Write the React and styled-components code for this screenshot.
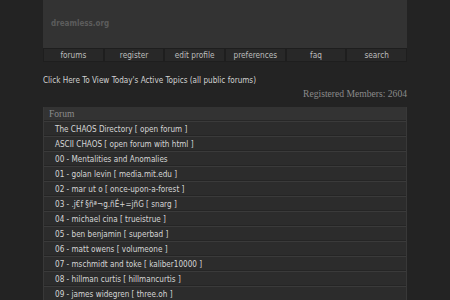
import React from "react";
import styled, { createGlobalStyle } from "styled-components";

const GlobalStyle = createGlobalStyle`
  html, body { margin: 0; padding: 0; background: #232323; }
  body { font-family: "DejaVu Sans Condensed", "Liberation Sans", Arial, sans-serif; }
`;

const Page = styled.div`
  width: 364px;
  margin: 0 auto;
`;

const Header = styled.div`
  height: 48px;
  background: #333333;
  display: flex;
  align-items: center;
  padding-left: 8px;
  box-sizing: border-box;
`;

const Logo = styled.div`
  font-size: 8px;
  font-weight: bold;
  color: #5c5c5c;
  margin-top: -1px;
`;

const Nav = styled.div`
  display: grid;
  grid-template-columns: repeat(6, 1fr);
  gap: 2px;
  padding: 1px;
  height: 14px;
  box-sizing: border-box;
  background: #1e1e1e;
`;

const NavItem = styled.a`
  display: flex;
  align-items: center;
  justify-content: center;
  background: #282828;
  color: #bdbdbd;
  font-size: 8.2px;
  text-decoration: none;
  line-height: 12px;
`;

const ActiveLink = styled.a`
  display: block;
  margin-top: 13px;
  line-height: 10px;
  font-size: 8.1px;
  color: #d2d2d2;
  text-decoration: none;
`;

const Members = styled.div`
  margin-top: 3px;
  line-height: 12px;
  text-align: right;
  font-family: "Liberation Serif", "Times New Roman", serif;
  font-size: 9.6px;
  color: #8a8a8a;
`;

const Table = styled.div`
  margin-top: 7px;
  border-left: 1px solid #383838;
  border-right: 1px solid #383838;
  box-sizing: border-box;
`;

const HeadRow = styled.div`
  height: 13px;
  background: #333333;
  border-bottom: 1px solid #272727;
  display: flex;
  align-items: center;
  padding-left: 5px;
  font-family: "Liberation Serif", "Times New Roman", serif;
  font-size: 9.5px;
  color: #8c8c8c;
`;

const Row = styled.div`
  height: 13px;
  background: #2c2c2c;
  border-top: 1px solid #3a3a3a;
  border-bottom: 1px solid #252525;
  display: flex;
  align-items: center;
  padding-left: 11px;
`;

const RowLink = styled.a`
  color: #d6d6d6;
  font-size: 8.1px;
  text-decoration: none;
  white-space: nowrap;
`;

const navItems = ["forums", "register", "edit profile", "preferences", "faq", "search"];

const forums = [
  "The CHAOS Directory [ open forum ]",
  "ASCII CHAOS [ open forum with html ]",
  "00 - Mentalities and Anomalies",
  "01 - golan levin [ media.mit.edu ]",
  "02 - mar ut o [ once-upon-a-forest ]",
  "03 - .j€f §ñª¬g.ñÉ+=jñG [ snarg ]",
  "04 - michael cina [ trueistrue ]",
  "05 - ben benjamin [ superbad ]",
  "06 - matt owens [ volumeone ]",
  "07 - mschmidt and toke [ kaliber10000 ]",
  "08 - hillman curtis [ hillmancurtis ]",
  "09 - james widegren [ three.oh ]",
];

export default function App() {
  return (
    <>
      <GlobalStyle />
      <Page>
        <Header>
          <Logo>dreamless.org</Logo>
        </Header>
        <Nav>
          {navItems.map((n) => (
            <NavItem key={n} href="#">{n}</NavItem>
          ))}
        </Nav>
        <ActiveLink href="#">Click Here To View Today's Active Topics (all public forums)</ActiveLink>
        <Members>Registered Members: 2604</Members>
        <Table>
          <HeadRow>Forum</HeadRow>
          {forums.map((f) => (
            <Row key={f}>
              <RowLink href="#">{f}</RowLink>
            </Row>
          ))}
        </Table>
      </Page>
    </>
  );
}
